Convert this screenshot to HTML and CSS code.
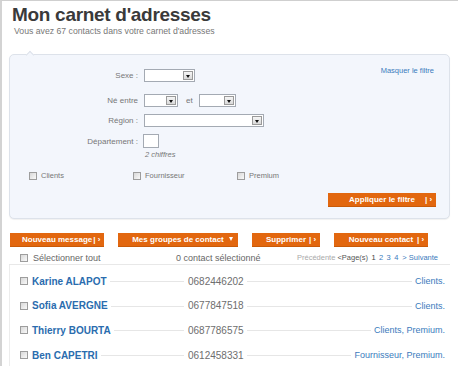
FILE: index.html
```html
<!DOCTYPE html>
<html lang="fr">
<head>
    <meta charset="UTF-8">
    <meta name="viewport" content="width=device-width, initial-scale=1.0">
    <title>Mon carnet d'adresses</title>
    <link rel="stylesheet" href="styles.css">
</head>
<body>
    <div class="page">
        <h1 class="title">Mon carnet d'adresses</h1>
        <p class="subtitle">Vous avez 67 contacts dans votre carnet d'adresses</p>

        <div class="filter">
            <div class="field field-sex">
                <span class="label">Sexe :</span>
                <span class="select w-sex"><span class="arrow"></span></span>
                <a class="hide-filter" href="#">Masquer le filtre</a>
            </div>
            <div class="field field-born">
                <span class="label">Né entre</span>
                <span class="select w-year"><span class="arrow"></span></span>
                <span class="and">et</span>
                <span class="select w-year2"><span class="arrow"></span></span>
            </div>
            <div class="field">
                <span class="label">Région :</span>
                <span class="select w-region"><span class="arrow"></span></span>
            </div>
            <div class="field">
                <span class="label">Département :</span>
                <span class="text-input"></span>
            </div>
            <p class="hint">2 chiffres</p>
            <div class="types">
                <span class="check-label"><span class="checkbox"></span>Clients</span>
                <span class="check-label"><span class="checkbox"></span>Fournisseur</span>
                <span class="check-label"><span class="checkbox"></span>Premium</span>
            </div>
            <div class="apply-row">
                <a class="btn btn-apply" href="#"><span class="btn-label">Appliquer le filtre</span><span class="btn-end">| ›</span></a>
            </div>
        </div>

        <div class="actions">
            <a class="btn btn-message" href="#"><span class="btn-label">Nouveau message</span><span class="btn-end">| ›</span></a>
            <a class="btn btn-groups" href="#"><span class="btn-label">Mes groupes de contact</span><span class="btn-end"><span class="caret"></span></span></a>
            <a class="btn btn-delete" href="#"><span class="btn-label">Supprimer</span><span class="btn-end">| ›</span></a>
            <a class="btn btn-contact" href="#"><span class="btn-label">Nouveau contact</span><span class="btn-end">| ›</span></a>
        </div>

        <div class="toolbar">
            <span class="check-label select-all"><span class="checkbox"></span>Sélectionner tout</span>
            <span class="selected-count">0 contact sélectionné</span>
            <span class="pager">
                <span class="pager-off">Précédente</span> <span class="pager-dark">&lt;Page(s)</span><span class="page-num current">1</span><a class="page-num" href="#">2</a><a class="page-num" href="#">3</a><a class="page-num" href="#">4</a><a class="pager-next" href="#">&gt; Suivante</a>
            </span>
        </div>

        <div class="contacts">
            <div class="contact">
                <div class="contact-main"><span class="checkbox"></span><a class="name" href="#">Karine ALAPOT</a><span class="rule"></span></div>
                <span class="phone">0682446202</span>
                <div class="contact-tags"><span class="rule"></span><span class="tags">Clients.</span></div>
            </div>
            <div class="contact">
                <div class="contact-main"><span class="checkbox"></span><a class="name" href="#">Sofia AVERGNE</a><span class="rule"></span></div>
                <span class="phone">0677847518</span>
                <div class="contact-tags"><span class="rule"></span><span class="tags">Clients.</span></div>
            </div>
            <div class="contact">
                <div class="contact-main"><span class="checkbox"></span><a class="name" href="#">Thierry BOURTA</a><span class="rule"></span></div>
                <span class="phone">0687786575</span>
                <div class="contact-tags"><span class="rule"></span><span class="tags">Clients, Premium.</span></div>
            </div>
            <div class="contact">
                <div class="contact-main"><span class="checkbox"></span><a class="name" href="#">Ben CAPETRI</a><span class="rule"></span></div>
                <span class="phone">0612458331</span>
                <div class="contact-tags"><span class="rule"></span><span class="tags">Fournisseur, Premium.</span></div>
            </div>
        </div>
    </div>
</body>
</html>
```

FILE: styles.css
```css
:root {
    --orange: #e2670f;
    --blue: #2a6cae;
    --link: #3b7bbd;
    --label: #777;
    --rule: #e6e6e6;
}
* {
    box-sizing: border-box;
}
html, body {
    height: 100%;
}
body {
    margin: 0;
    overflow: hidden;
    border-top: 1px solid #cfcfcf;
    border-left: 2px solid #d3d3d3;
    background: #fff;
    color: #666;
    font-family: "Liberation Sans", Arial, sans-serif;
}
a {
    text-decoration: none;
}
.page {
    padding: 0 8px 0 7px;
}
.title {
    margin: 4px 0 0 3px;
    font-size: 19px;
    line-height: 19px;
    font-weight: bold;
    letter-spacing: -0.3px;
    color: #3a3a3a;
}
.subtitle {
    margin: 1.5px 0 0 5px;
    font-size: 8.7px;
    line-height: 11px;
    color: #777;
}

/* Filter box */
.filter {
    position: relative;
    margin-top: 17.5px;
    padding: 14px 13px 11px 0;
    background: #f3f6fc;
    border: 1px solid #dde2ea;
    border-radius: 5px;
    box-shadow: 0 1px 1px rgba(0, 0, 0, 0.06);
}
.filter::before {
    content: "";
    position: absolute;
    top: -3px;
    left: 17px;
    width: 5px;
    height: 5px;
    background: #f3f6fc;
    border-top: 1px solid #dde2ea;
    border-left: 1px solid #dde2ea;
    transform: rotate(45deg);
}
.field {
    display: flex;
    align-items: center;
    height: 13px;
    margin-bottom: 7px;
    font-size: 8px;
    color: var(--label);
}
.field-sex {
    margin-bottom: 12px;
}
.label {
    width: 128px;
    margin-right: 6px;
    text-align: right;
    white-space: nowrap;
}
.select {
    display: flex;
    justify-content: flex-end;
    height: 13px;
    padding: 1px;
    background: #fff;
    border: 1px solid #a4aab3;
}
.w-sex { width: 51px; }
.w-year { width: 34px; }
.w-year2 { width: 37px; }
.w-region { width: 120px; }
.arrow {
    position: relative;
    width: 10px;
    height: 9px;
    border: 1px solid #9a9a9a;
    background: linear-gradient(#f6f6f6, #d9d9d9);
}
.arrow::after {
    content: "";
    position: absolute;
    left: 2px;
    top: 3px;
    border-left: 2px solid transparent;
    border-right: 2px solid transparent;
    border-top: 3px solid #111;
}
.and {
    margin: 0 6px 0 8px;
}
.hide-filter {
    align-self: flex-start;
    margin: -3px 2px 0 auto;
    font-size: 7.5px;
    line-height: 10px;
    color: var(--link);
}
.text-input {
    width: 16px;
    height: 14px;
    margin-left: -1px;
    background: #fff;
    border: 1px solid #a4aab3;
}
.field:nth-child(4) {
    height: 14px;
    margin-bottom: 0;
}
.hint {
    margin: 1.5px 0 0 135px;
    font-size: 7.5px;
    line-height: 9px;
    font-style: italic;
    color: var(--label);
}
.types {
    display: grid;
    grid-template-columns: repeat(3, 104px);
    margin-top: 12.5px;
    padding-left: 19px;
}
.check-label {
    display: flex;
    align-items: center;
    height: 9px;
    font-size: 7.5px;
    color: var(--label);
    white-space: nowrap;
}
.checkbox {
    flex: none;
    width: 8px;
    height: 8px;
    margin-right: 4px;
    border: 1px solid #9d9d9d;
    background: linear-gradient(135deg, #d8d8d8, #f9f9f9);
}
.apply-row {
    display: flex;
    justify-content: flex-end;
    margin-top: 13px;
}

/* Orange buttons */
.btn {
    display: flex;
    align-items: center;
    height: 14px;
    background: var(--orange);
    border-bottom: 1px solid #c95a08;
    color: #fff;
    font-size: 8px;
    font-weight: bold;
    white-space: nowrap;
}
.btn::before {
    content: "";
    width: 12px;
    flex: none;
}
.btn-label {
    flex: 1;
    text-align: center;
}
.btn-end {
    width: 12px;
    flex: none;
    padding-left: 1px;
}
.caret {
    display: inline-block;
    margin: 0 0 1px 2px;
    border-left: 2.5px solid transparent;
    border-right: 2.5px solid transparent;
    border-top: 4px solid #fff;
}
.btn-apply { width: 108px; }
.btn-message { width: 94px; }
.btn-groups { width: 120px; }
.btn-delete { width: 68px; }
.btn-contact { width: 94px; }
.actions {
    display: flex;
    gap: 14px;
    margin: 14px 0 0 1px;
}

/* List toolbar */
.toolbar {
    display: grid;
    grid-template-columns: 156px auto 1fr;
    align-items: center;
    height: 14px;
    margin-top: 4px;
    padding: 0 12px 0 11px;
    border-bottom: 1px solid #e8e8e8;
}
.select-all {
    font-size: 9px;
    color: #666;
}
.select-all .checkbox {
    margin-right: 5px;
}
.selected-count {
    font-size: 9px;
    color: #666;
}
.pager {
    justify-self: end;
    font-size: 7.5px;
    white-space: nowrap;
}
.pager-off {
    color: #aaa;
}
.pager-dark {
    color: #555;
}
.page-num {
    margin-left: 3.4px;
    color: var(--link);
}
.page-num.current {
    color: #444;
}
.pager-next {
    margin-left: 4px;
    color: var(--link);
}

/* Contacts */
.contacts {
    padding: 4px 5px 0 10px;
    border-left: 1px solid #ececec;
}
.contact {
    display: grid;
    grid-template-columns: 168px auto 1fr;
    align-items: center;
    height: 24.6px;
}
.contact-main, .contact-tags {
    display: flex;
    align-items: center;
}
.name {
    font-size: 10px;
    font-weight: bold;
    color: var(--blue);
    white-space: nowrap;
}
.rule {
    flex: 1;
    height: 1px;
    margin: 1px 4px 0 3px;
    background: var(--rule);
}
.contact-tags .rule {
    margin: 1px 3px 0 3px;
}
.phone {
    font-size: 10px;
    color: #6e6e6e;
}
.tags {
    font-size: 9px;
    color: var(--link);
    white-space: nowrap;
}
```
